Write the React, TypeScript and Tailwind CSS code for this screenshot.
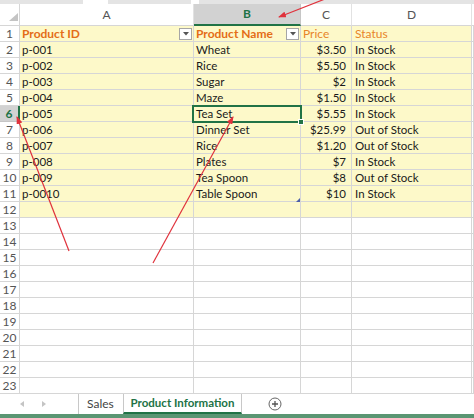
import * as React from 'react'

const rows = [
  ['p-001', 'Wheat', '$3.50', 'In Stock'],
  ['p-002', 'Rice', '$5.50', 'In Stock'],
  ['p-003', 'Sugar', '$2', 'In Stock'],
  ['p-004', 'Maze', '$1.50', 'In Stock'],
  ['p-005', 'Tea Set', '$5.55', 'In Stock'],
  ['p-006', 'Dinner Set', '$25.99', 'Out of Stock'],
  ['p-007', 'Rice', '$1.20', 'Out of Stock'],
  ['p-008', 'Plates', '$7', 'In Stock'],
  ['p-009', 'Tea Spoon', '$8', 'Out of Stock'],
  ['p-0010', 'Table Spoon', '$10', 'In Stock'],
]

const line = 'border-r border-b border-[#d6d6d6]'

function FilterButton() {
  return (
    <span className="ml-auto mr-[1px] flex h-[12px] w-[13px] items-center justify-center border border-[#a6a6a6] bg-white">
      <svg width="6" height="4" viewBox="0 0 6 4">
        <path d="M0 0 L6 0 L3 3.5 Z" fill="#555" />
      </svg>
    </span>
  )
}

function RowHead({ n }: { n: number }) {
  const active = n === 6
  return (
    <div
      className={
        'flex h-[16px] w-[20px] shrink-0 items-center justify-center border-b text-[12px] ' +
        (active
          ? 'border-r-2 border-r-[#217346] border-b-[#c6c6c6] bg-[#d2d2d2] font-bold text-[#217346]'
          : 'border-r border-[#d6d6d6] text-[#555]')
      }
    >
      {n}
    </div>
  )
}

function SheetRow({ n, cells }: { n: number; cells?: string[] }) {
  const yellow = n <= 12
  const bg = yellow ? 'bg-[#fdf9c9]' : 'bg-white'
  const header = n === 1
  return (
    <div className={`flex h-[16px] ${header ? 'text-[12px]' : 'text-[11.5px]'}`}>
      <RowHead n={n} />
      <div className={`flex w-[174px] shrink-0 items-center pl-[2px] ${line} ${bg}`}>
        {header ? (
          <>
            <span className="font-bold text-[#e46d17]">Product ID</span>
            <FilterButton />
          </>
        ) : (
          cells?.[0]
        )}
      </div>
      <div className={`flex w-[107px] shrink-0 items-center whitespace-nowrap pl-[2px] ${line} ${bg}`}>
        {header ? (
          <>
            <span className="font-bold text-[#e46d17]">Product Name</span>
            <FilterButton />
          </>
        ) : (
          cells?.[1]
        )}
      </div>
      <div
        className={`flex w-[51px] shrink-0 items-center ${header ? 'justify-start pl-[2px] text-[#e8852a]' : 'justify-end pr-[5px]'} ${line} ${bg}`}
      >
        {header ? 'Price' : cells?.[2]}
      </div>
      <div className={`flex w-[120px] shrink-0 items-center pl-[3px] ${line} ${bg} ${header ? 'text-[#e8852a]' : ''}`}>
        {header ? 'Status' : cells?.[3]}
      </div>
      <div className={`flex-1 ${line} bg-white`} />
    </div>
  )
}

export default function App() {
  const all = Array.from({ length: 23 }, (_, i) => i + 1)
  return (
    <div className="relative h-[418px] w-[474px] overflow-hidden bg-white font-['Lato','Noto_Sans',sans-serif] text-[12px] text-[#1a1a1a]">
      {/* ribbon remnant */}
      <div className="flex h-[4px]">
        <div className="w-[83px] bg-[#e4e4e4]" />
        <div className="w-[25px] bg-white" />
        <div className="w-[83px] bg-[#e4e4e4]" />
        <div className="w-[8px] bg-white" />
        <div className="flex-1 bg-[#e4e4e4]" />
      </div>

      {/* column headers */}
      <div className="flex h-[22px] text-[12px] text-[#555]">
        <div className="relative w-[20px] shrink-0 border-r border-b border-[#d6d6d6]">
          <svg className="absolute right-[1px] bottom-[4px]" width="9" height="8" viewBox="0 0 9 8">
            <path d="M9 0 L9 8 L0 8 Z" fill="#c4c4c4" />
          </svg>
        </div>
        <div className="flex w-[174px] shrink-0 items-center justify-center border-r border-b border-r-[#e2e2e2] border-b-[#d6d6d6]">A</div>
        <div className="flex w-[107px] shrink-0 items-center justify-center border-r border-b-2 border-r-[#c6c6c6] border-b-[#217346] bg-[#d2d2d2] font-bold text-[#217346]">
          B
        </div>
        <div className="flex w-[51px] shrink-0 items-center justify-center border-r border-b border-r-[#e2e2e2] border-b-[#d6d6d6]">C</div>
        <div className="flex w-[120px] shrink-0 items-center justify-center border-r border-b border-r-[#e2e2e2] border-b-[#d6d6d6]">D</div>
        <div className="flex-1 border-b border-[#d6d6d6]" />
      </div>

      {/* grid */}
      <div className="relative">
        {all.map(n => (
          <SheetRow key={n} n={n} cells={n >= 2 && n <= 11 ? rows[n - 2] : undefined} />
        ))}

        {/* selected cell B6 */}
        <div className="absolute left-[192px] top-[79px] h-[18px] w-[110px] border-2 border-[#217346]">
          <span className="absolute -right-[4px] -bottom-[4px] h-[6px] w-[6px] border border-white bg-[#217346]" />
        </div>

        {/* table resize handle */}
        <svg className="absolute left-[296px] top-[172px]" width="4" height="4" viewBox="0 0 4 4">
          <path d="M4 0 L4 4 L0 4 Z" fill="#4b5ea8" />
        </svg>
      </div>

      {/* sheet tabs */}
      <div className="flex h-[20px] items-stretch bg-white text-[12px]">
        <div className="flex w-[79px] items-center gap-[18px] border-r border-[#c8c8c8] pl-[20px]">
          <svg width="4" height="6" viewBox="0 0 4 6">
            <path d="M4 0 L0 3 L4 6 Z" fill="#c4c4c4" />
          </svg>
          <svg width="4" height="6" viewBox="0 0 4 6">
            <path d="M0 0 L4 3 L0 6 Z" fill="#c4c4c4" />
          </svg>
        </div>
        <div className="flex w-[44px] items-center pl-[8px] text-[#444]">Sales</div>
        <div className="flex w-[119px] items-center justify-center border-x border-b-2 border-x-[#c8c8c8] border-b-[#217346] text-[11.5px] font-bold text-[#217346]">
          Product Information
        </div>
        <div className="flex flex-1 items-center pl-[26px]">
          <svg width="14" height="14" viewBox="0 0 14 14">
            <circle cx="7" cy="7" r="6" fill="none" stroke="#666" strokeWidth="1" />
            <path d="M7 4 V10 M4 7 H10" stroke="#555" strokeWidth="1.3" />
          </svg>
        </div>
      </div>
      <div className="h-[4px] bg-[#5a9673]" />

      {/* red annotation arrows */}
      <svg className="pointer-events-none absolute left-0 top-0" width="474" height="418" viewBox="0 0 474 418">
        <defs>
          <marker id="ah" markerWidth="8" markerHeight="6" refX="7" refY="3" orient="auto" markerUnits="userSpaceOnUse">
            <path d="M0 0 L8 3 L0 6 Z" fill="#e0323c" />
          </marker>
        </defs>
        <g stroke="#e0323c" strokeWidth="1.2" fill="none">
          <line x1="325" y1="-1" x2="279" y2="17" markerEnd="url(#ah)" />
          <line x1="69" y1="251" x2="17" y2="117" markerEnd="url(#ah)" />
          <line x1="153" y1="263" x2="233" y2="117" markerEnd="url(#ah)" />
        </g>
      </svg>
    </div>
  )
}
